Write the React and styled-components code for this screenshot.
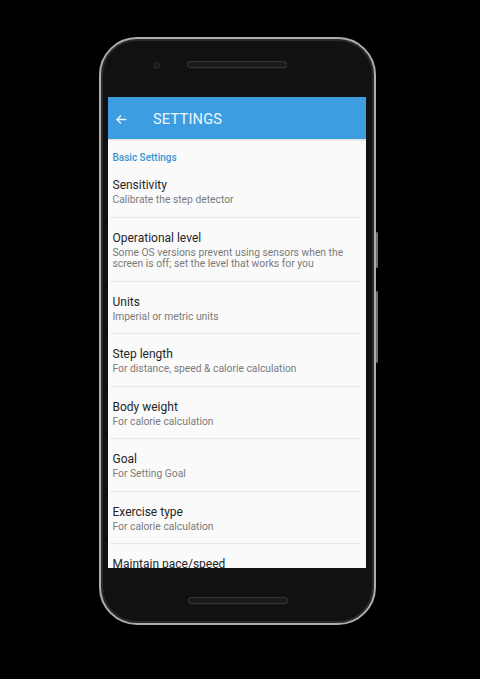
import React from 'react'
import styled, { createGlobalStyle } from 'styled-components'

const Global = createGlobalStyle`
  html, body {
    margin: 0;
    padding: 0;
    background: #000;
  }
  body {
    font-family: Roboto, "Noto Sans", "Liberation Sans", sans-serif;
  }
`

const Page = styled.div`
  width: 480px;
  height: 679px;
  background: #000;
  padding: 37px 0 0 99px;
  box-sizing: border-box;
  overflow: hidden;
`

const Phone = styled.div`
  position: relative;
  width: 277px;
  height: 588px;
  box-sizing: border-box;
  border: 2px solid #adadad;
  border-radius: 38px;
  background: #111;
  box-shadow: inset 0 0 0 2px #2a2a2a;
  display: flex;
  flex-direction: column;
  padding: 0 8px 0 7px;
`

const SideButton = styled.div`
  position: absolute;
  right: -4px;
  top: ${p => p.top}px;
  width: 2px;
  height: ${p => p.h}px;
  background: #6e6e6e;
  border-radius: 1px;
`

const Bezel = styled.div`
  position: relative;
  height: ${p => p.h}px;
  flex: none;
  display: flex;
  justify-content: center;
  align-items: flex-start;
  padding-top: ${p => p.pad}px;
  box-sizing: border-box;
`

const Speaker = styled.div`
  width: 100px;
  height: 7px;
  border-radius: 4px;
  background: #1b1b1b;
  box-shadow: inset 0 0 0 1px #333, 0 1px 0 #181818;
  margin-left: ${p => p.shift || 0}px;
`

const Camera = styled.div`
  position: absolute;
  left: 45px;
  top: 23px;
  width: 7px;
  height: 7px;
  border-radius: 50%;
  background: #1e1e1e;
  box-shadow: inset 0 0 0 1px #262626;
`

const Screen = styled.div`
  flex: none;
  height: 471px;
  background: #fafafa;
  overflow: hidden;
  display: flex;
  flex-direction: column;
`

const AppBar = styled.div`
  flex: none;
  height: 42px;
  background: #3c9de1;
  display: flex;
  align-items: center;
  padding-top: 2px;
  box-sizing: border-box;
  color: #eef7fd;
  box-shadow: 0 1px 2px rgba(0, 0, 0, 0.15);
`

const Back = styled.svg`
  width: 13px;
  height: 13px;
  margin-left: 7px;
  margin-right: 25px;
`

const BarTitle = styled.span`
  font-size: 14.6px;
  letter-spacing: 0.2px;
`

const List = styled.div`
  display: flex;
  flex-direction: column;
`

const Category = styled.div`
  padding: 12px 0 0 4.5px;
  line-height: 14px;
  font-size: 10px;
  font-weight: 500;
  color: #3a93d2;
`

const Row = styled.div`
  padding: 12px 0 11px 4.5px;
  margin: 0 6px 0 2px;
  border-bottom: ${p => (p.last ? 'none' : '1px solid #e8e8e8')};
`

const RowTitle = styled.div`
  font-size: 12px;
  line-height: 16px;
  color: #262626;
  margin-left: -2px;
`

const RowSub = styled.div`
  font-size: 10.3px;
  line-height: 11.5px;
  margin-top: 1px;
  color: #7a7a7a;
  margin-left: -2px;
  padding-right: 6px;
`

const items = [
  ['Sensitivity', 'Calibrate the step detector'],
  ['Operational level', 'Some OS versions prevent using sensors when the screen is off; set the level that works for you'],
  ['Units', 'Imperial or metric units'],
  ['Step length', 'For distance, speed & calorie calculation'],
  ['Body weight', 'For calorie calculation'],
  ['Goal', 'For Setting Goal'],
  ['Exercise type', 'For calorie calculation'],
  ['Maintain pace/speed', 'Get notified when you are too slow or fast'],
]

export default function App() {
  return (
    <Page>
      <Global />
      <Phone>
        <SideButton top={193} h={36} />
        <SideButton top={252} h={72} />
        <Bezel h={58} pad={22}>
          <Camera />
          <Speaker />
        </Bezel>
        <Screen>
          <AppBar>
            <Back viewBox="0 0 24 24" fill="none" stroke="currentColor" strokeWidth="2.4">
              <path d="M21 12H4M11 4.5L3.5 12 11 19.5" />
            </Back>
            <BarTitle>SETTINGS</BarTitle>
          </AppBar>
          <List>
            <Category>Basic Settings</Category>
            {items.map(([t, s], i) => (
              <Row key={t} last={i === items.length - 1}>
                <RowTitle>{t}</RowTitle>
                <RowSub>{s}</RowSub>
              </Row>
            ))}
          </List>
        </Screen>
        <Bezel h={55} pad={29}>
          <Speaker shift={2} />
        </Bezel>
      </Phone>
    </Page>
  )
}
